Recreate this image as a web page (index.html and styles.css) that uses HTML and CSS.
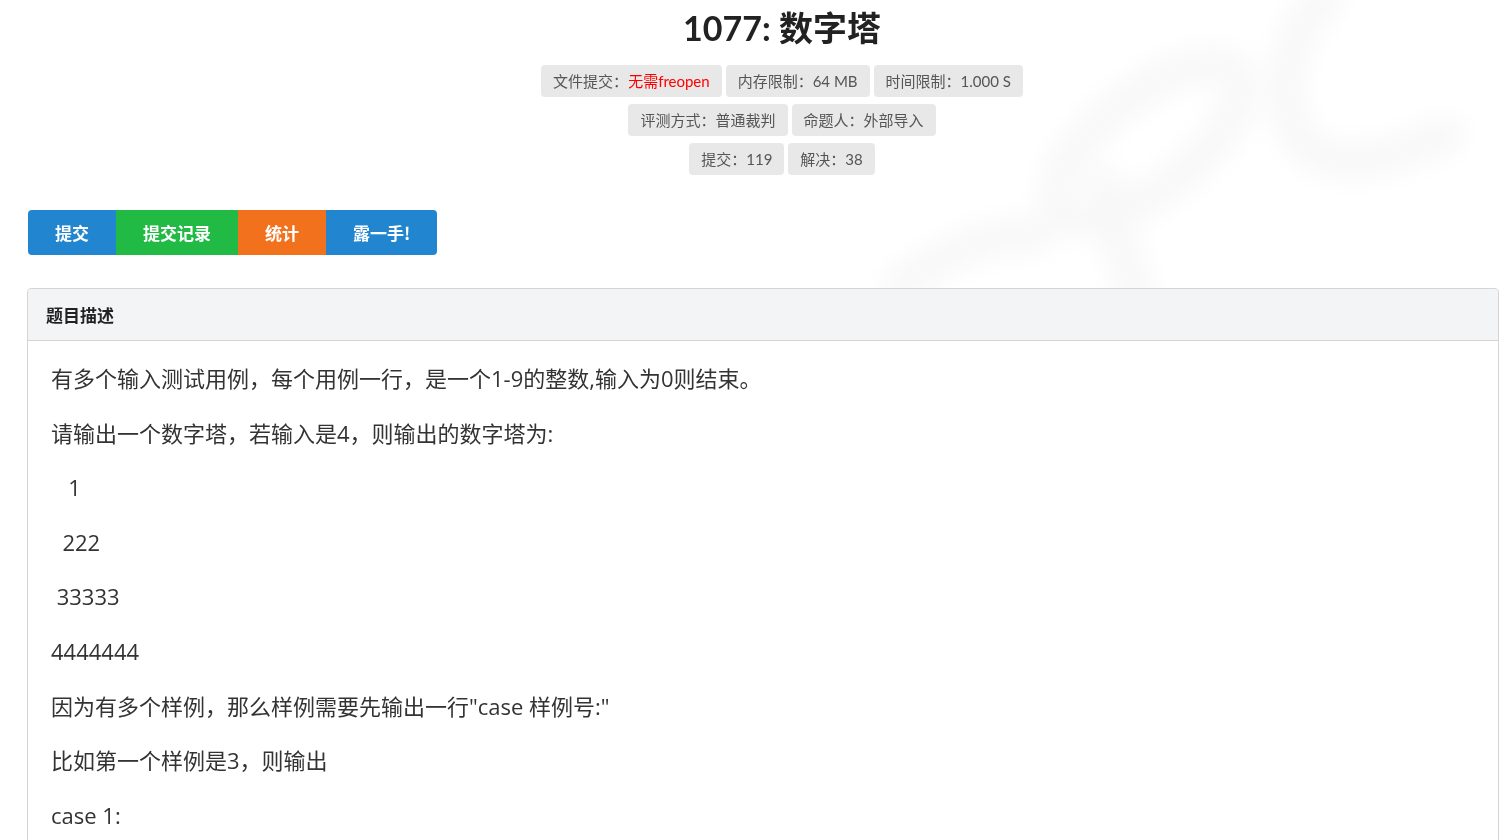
FILE: index.html
```html
<!DOCTYPE html>
<html lang="zh-CN">
<head>
  <meta charset="UTF-8">
  <title>1077: 数字塔</title>
  <link rel="stylesheet" href="styles.css">
</head>
<body>

  <!-- faint background watermark -->
  <svg class="watermark" width="700" height="300" viewBox="0 0 700 300">
    <defs>
      <filter id="soft" x="-30%" y="-30%" width="160%" height="160%"><feGaussianBlur stdDeviation="12"/></filter>
    </defs>
    <g fill="none" stroke="#f8f8f8" stroke-width="36" stroke-linecap="round" filter="url(#soft)">
      <path d="M95 285 C135 255 190 230 230 236"/>
      <ellipse cx="342" cy="142" rx="112" ry="46" transform="rotate(-38 342 142)"/>
      <path d="M298 185 C308 225 320 265 332 300"/>
      <path d="M520 -5 C465 50 465 150 530 160 C570 166 600 150 640 135"/>
    </g>
  </svg>

  <div class="container">
    <div class="head">
      <h1 class="title">1077: 数字塔</h1>
      <div class="labels">
        <span class="label">文件提交：<em class="red">无需freopen</em></span>
        <span class="label">内存限制：64 MB</span>
        <span class="label">时间限制：1.000 S</span>
      </div>
      <div class="labels">
        <span class="label">评测方式：普通裁判</span>
        <span class="label">命题人：外部导入</span>
      </div>
      <div class="labels">
        <span class="label">提交：119</span>
        <span class="label">解决：38</span>
      </div>
    </div>

    <div class="buttons">
      <a class="btn blue" href="#">提交</a>
      <a class="btn green" href="#">提交记录</a>
      <a class="btn orange" href="#">统计</a>
      <a class="btn blue" href="#">露一手!</a>
    </div>

    <div class="panel">
      <div class="panel-head">题目描述</div>
      <div class="panel-body">
        <p>有多个输入测试用例，每个用例一行，是一个1-9的整数,输入为0则结束。</p>
        <p>请输出一个数字塔，若输入是4，则输出的数字塔为:</p>
        <p>&nbsp;&nbsp;&nbsp;1</p>
        <p>&nbsp;&nbsp;222</p>
        <p>&nbsp;33333</p>
        <p>4444444</p>
        <p>因为有多个样例，那么样例需要先输出一行"case 样例号:"</p>
        <p>比如第一个样例是3，则输出</p>
        <p>case 1:</p>
        <p>&nbsp;&nbsp;1</p>
        <p>&nbsp;222</p>
        <p>33333</p>
      </div>
    </div>
  </div>

</body>
</html>
```

FILE: styles.css
```css
body {
  margin: 0;
  background: #fff;
  font-family: Lato, "Noto Sans CJK SC", sans-serif;
  color: #333;
}
.watermark {
  position: absolute;
  top: 0;
  right: 0;
  z-index: 0;
  pointer-events: none;
}
.container {
  position: relative;
  z-index: 1;
  padding: 0 7px 0 27px;
}
.head {
  padding-left: 38px;
  text-align: center;
}
.title {
  margin: 8px 0 17px;
  font-size: 34px;
  line-height: 40px;
  font-weight: 700;
  color: #222;
}
.labels {
  display: flex;
  justify-content: center;
  gap: 4px;
  margin-bottom: 7px;
}
.label {
  display: inline-block;
  height: 32px;
  line-height: 32px;
  padding: 0 12px;
  background: #e8e8e8;
  border-radius: 4px;
  font-size: 15px;
  color: #555;
}
.label em {
  font-style: normal;
}
.red {
  color: #ff0000;
}
.buttons {
  display: flex;
  margin-top: 35px;
  width: max-content;
  margin-left: 1px;
}
.btn {
  display: block;
  height: 45px;
  line-height: 45px;
  padding: 0 27px;
  font-family: "Noto Sans CJK SC", sans-serif;
  font-weight: 700;
  font-size: 17px;
  color: #fff;
  text-decoration: none;
}
.btn:first-child {
  border-radius: 4px 0 0 4px;
}
.btn:last-child {
  border-radius: 0 4px 4px 0;
}
.blue {
  background: #2185d0;
}
.green {
  background: #21ba45;
}
.orange {
  background: #f2711c;
}
.panel {
  margin-top: 33px;
  border: 1px solid #d4d4d5;
  border-radius: 4px;
  background: #fff;
}
.panel-head {
  padding: 14px 18px;
  line-height: 23px;
  background: #f3f4f5;
  border-bottom: 1px solid #d4d4d5;
  border-radius: 4px 4px 0 0;
  font-family: "Noto Sans CJK SC", sans-serif;
  font-weight: 700;
  font-size: 17px;
  color: #222;
}
.panel-body {
  padding: 21px 23px 10px;
  font-family: "Open Sans", "Noto Sans CJK SC", sans-serif;
  font-size: 22px;
  line-height: 33px;
  color: #333;
}
.panel-body p {
  margin: 0 0 21.6px;
}
```
